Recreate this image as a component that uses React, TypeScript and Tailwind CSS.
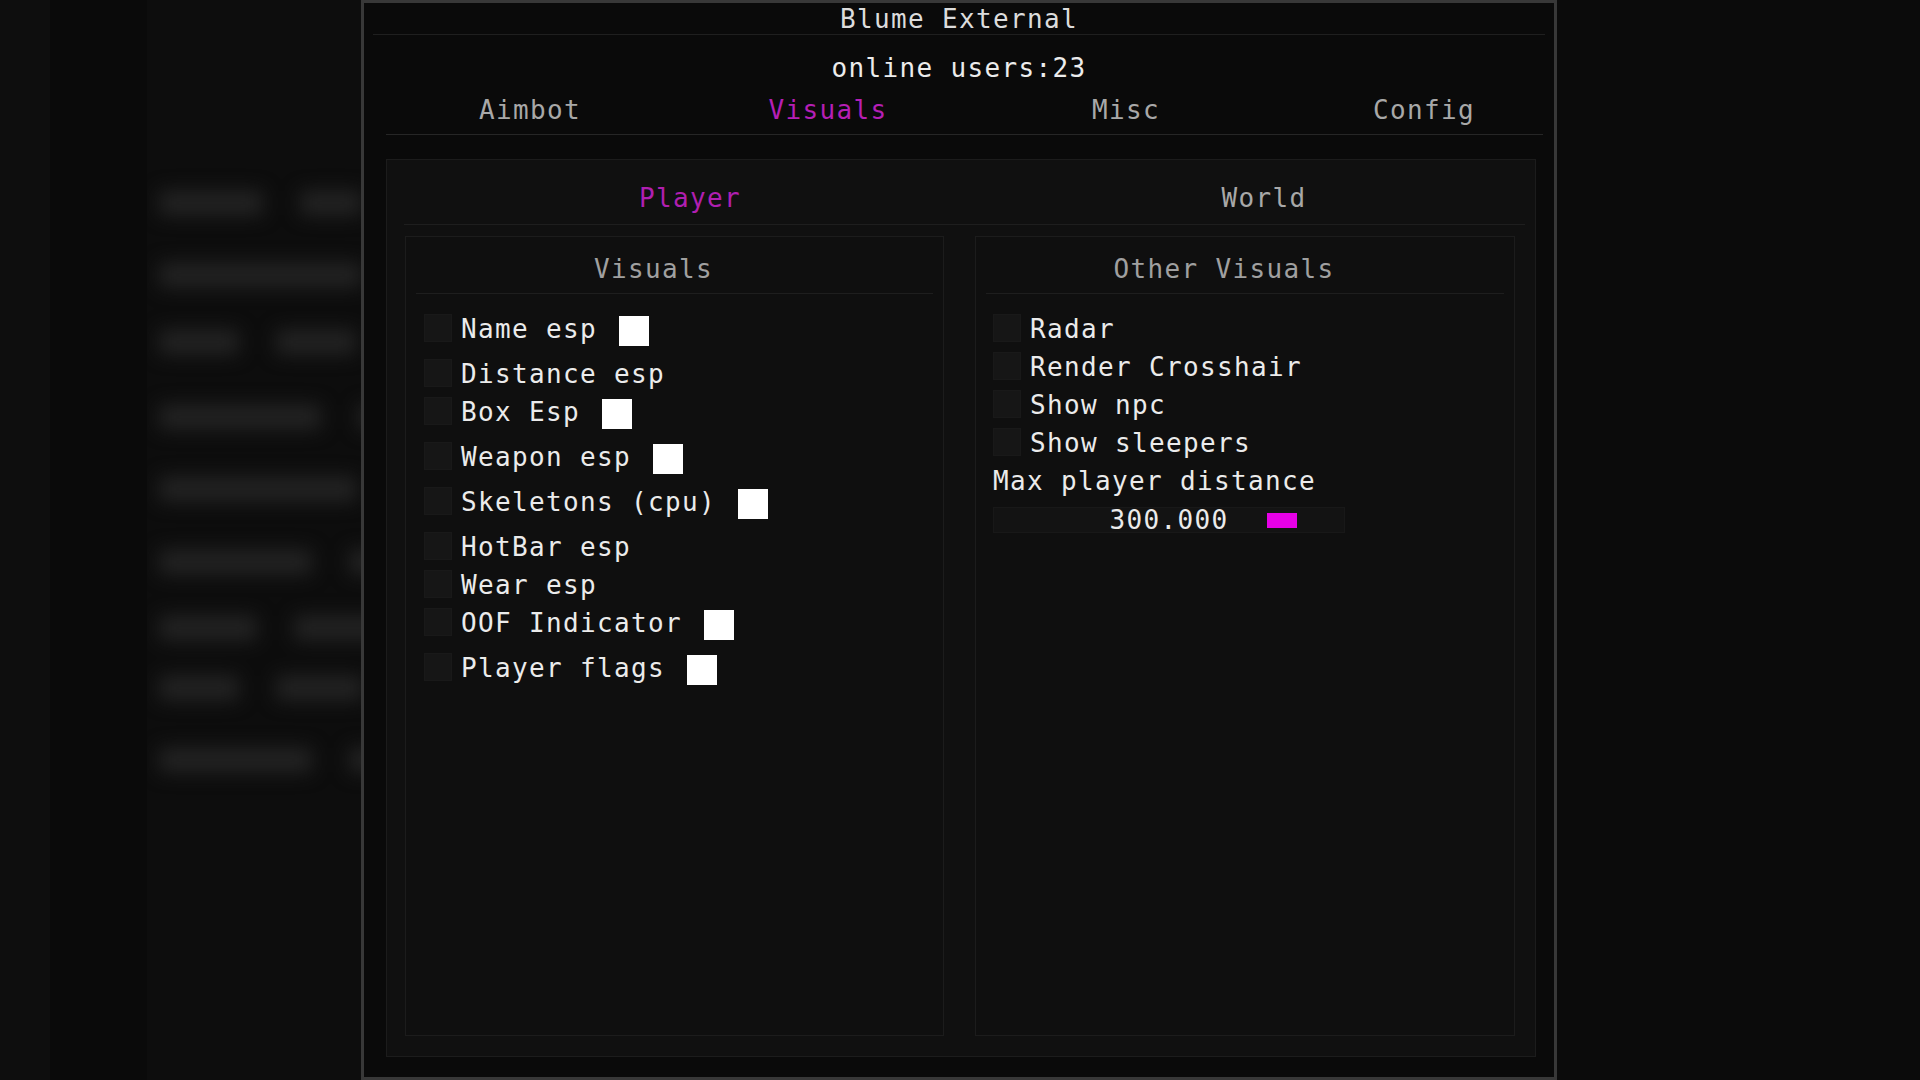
const font = "font-['DejaVu_Sans_Mono',monospace] text-[26px] leading-[28px] tracking-[1.35px]";

const blurRows = [
  { top: 40, bars: [104, 62] },
  { top: 46, bars: [203] },
  { top: 41, bars: [80, 80] },
  { top: 49, bars: [162, 90] },
  { top: 46, bars: [198] },
  { top: 47, bars: [153, 90] },
  { top: 40, bars: [98, 90] },
  { top: 34, bars: [80, 87] },
  { top: 46, bars: [153, 90] },
];

const leftItems = [
  { label: "Name esp", swatch: true },
  { label: "Distance esp", swatch: false },
  { label: "Box Esp", swatch: true },
  { label: "Weapon esp", swatch: true },
  { label: "Skeletons (cpu)", swatch: true },
  { label: "HotBar esp", swatch: false },
  { label: "Wear esp", swatch: false },
  { label: "OOF Indicator", swatch: true },
  { label: "Player flags", swatch: true },
];

const rightItems = ["Radar", "Render Crosshair", "Show npc", "Show sleepers"];

const tabs = ["Aimbot", "Visuals", "Misc", "Config"];

const Checkbox = () => (
  <div className="w-[28px] h-[28px] shrink-0 bg-[#161616] border border-[#191919]" />
);

const CheckRow = ({ label, swatch }: { label: string; swatch: boolean }) => (
  <div className={`flex items-start ${swatch ? "h-[45px]" : "h-[38px]"}`}>
    <Checkbox />
    <span className={`${font} ml-[9px] pt-[1px] text-[#ebebeb] whitespace-pre`}>{label}</span>
    {swatch && <div className="ml-[22px] mt-[2px] w-[30px] h-[30px] bg-white shrink-0" />}
  </div>
);

const Backdrop = () => (
  <div className="w-[361px] h-full shrink-0 flex">
    <div className="w-[50px] h-full shrink-0 bg-[#0e0e0e]" />
    <div className="w-[97px] h-full shrink-0 bg-[#0a0a0a]" />
    <div className="flex-1 min-w-0 h-full overflow-hidden bg-[#0d0d0d]">
      <div className="pl-[12px] pt-[150px] blur-[9px]">
        {blurRows.map((row, i) => (
          <div key={i} className="flex gap-[37px]" style={{ marginTop: row.top }}>
            {row.bars.map((w, j) => (
              <div key={j} className="h-[26px] shrink-0 bg-[#222222] rounded" style={{ width: w }} />
            ))}
          </div>
        ))}
      </div>
    </div>
  </div>
);

const App = () => (
  <div className="w-[1920px] h-[1080px] overflow-hidden flex bg-[#0b0b0b]">
    <Backdrop />

    <div className="w-[1196px] h-[1080px] shrink-0 border-[3px] border-[#383838] bg-[#0a0a0a] flex flex-col overflow-hidden">
      <div className={`${font} h-[31px] flex items-center justify-center text-[#dcdcdc]`}>Blume External</div>
      <div className="mx-[9px] h-px bg-[#1f1f1f]" />

      <div className={`${font} mt-[19px] text-center text-[#ececec]`}>online users:23</div>

      <div className="mt-[14px] pl-[17px] flex">
        {tabs.map((t) => (
          <div
            key={t}
            className={`${font} w-[298px] shrink-0 text-center ${t === "Visuals" ? "text-[#b51fb5]" : "text-[#a8a8a8]"}`}
          >
            {t}
          </div>
        ))}
      </div>
      <div className="mt-[10px] ml-[22px] w-[1157px] h-px bg-[#262626]" />

      <div className="mt-[24px] ml-[22px] w-[1150px] h-[898px] border border-[#1c1c1c] bg-[#101010] flex flex-col overflow-hidden">
        <div className="pt-[24px] pl-[16px] flex">
          <div className={`${font} w-[574px] shrink-0 text-center text-[#b01fb0]`}>Player</div>
          <div className={`${font} w-[574px] shrink-0 text-center text-[#a8a8a8]`}>World</div>
        </div>
        <div className="mt-[12px] ml-[17px] w-[1121px] h-px bg-[#1e1e1e]" />

        <div className="mt-[11px] ml-[18px] flex gap-[31px]">
          <div className="w-[539px] h-[800px] border border-[#1c1c1c] bg-[#0f0f0f] flex flex-col">
            <div className={`${font} pt-[18px] pr-[42px] text-center text-[#a0a0a0]`}>Visuals</div>
            <div className="mt-[10px] mx-[10px] h-px bg-[#1e1e1e]" />
            <div className="pt-[20px] pl-[18px] flex flex-col">
              {leftItems.map((it) => (
                <CheckRow key={it.label} label={it.label} swatch={it.swatch} />
              ))}
            </div>
          </div>

          <div className="w-[540px] h-[800px] border border-[#1c1c1c] bg-[#0f0f0f] flex flex-col">
            <div className={`${font} pt-[18px] pr-[42px] text-center text-[#a0a0a0]`}>Other Visuals</div>
            <div className="mt-[10px] mx-[10px] h-px bg-[#1e1e1e]" />
            <div className="pt-[20px] pl-[17px] flex flex-col">
              {rightItems.map((l) => (
                <CheckRow key={l} label={l} swatch={false} />
              ))}
              <div className={`${font} h-[41px] pt-[1px] text-[#ebebeb]`}>Max player distance</div>
              <div className="relative w-[352px] h-[26px] bg-[#131313] border border-[#181818] flex items-center justify-center">
                <span className={`${font} text-[#ebebeb]`}>300.000</span>
                <div className="absolute left-[273px] top-[5px] w-[30px] h-[15px] bg-[#e600e6]" />
              </div>
            </div>
          </div>
        </div>
      </div>
    </div>

    <div className="flex-1 h-full bg-[#0b0b0b]" />
  </div>
);

export default App;
